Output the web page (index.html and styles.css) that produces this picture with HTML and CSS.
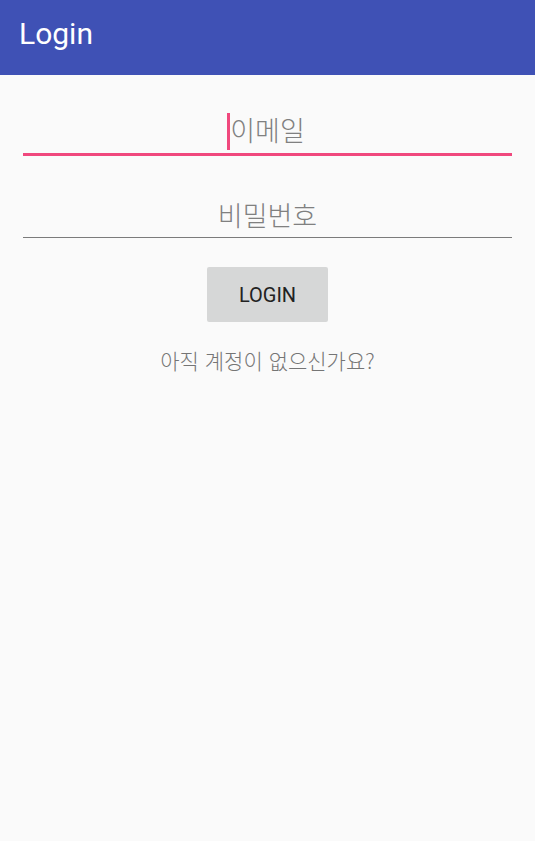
FILE: index.html
```html
<!DOCTYPE html>
<html lang="ko">
<head>
<meta charset="utf-8">
<title>Login</title>
<link rel="stylesheet" href="styles.css">
</head>
<body>
<header class="appbar"><span class="title">Login</span></header>
<main class="content">
  <div class="field focused">
    <span class="hint with-caret">이메일</span>
  </div>
  <div class="field">
    <span class="hint">비밀번호</span>
  </div>
  <button class="btn">LOGIN</button>
  <p class="signup">아직 계정이 없으신가요?</p>
</main>
</body>
</html>
```
FILE: styles.css
```css
html, body { margin: 0; padding: 0; }
body {
  background: #fafafa;
  width: 535px;
  height: 841px;
  font-family: Roboto, "Noto Sans CJK KR", sans-serif;
}
.appbar {
  height: 75px;
  background: #3f51b5;
  display: flex;
  align-items: center;
  padding-left: 19px;
  box-sizing: border-box;
}
.title {
  color: #fff;
  font-size: 30px;
  font-family: Roboto, sans-serif;
  line-height: 1;
  margin-top: -8px;
}
.content {
  display: flex;
  flex-direction: column;
  align-items: center;
  padding: 0 23px 0 23px;
}
.field {
  align-self: stretch;
  display: flex;
  justify-content: center;
  align-items: center;
  border-bottom: 1.5px solid #7b7b7b;
  font-family: "Noto Sans CJK KR", sans-serif;
  font-weight: 300;
  font-size: 27px;
  color: #808080;
  height: 46px;
  box-sizing: border-box;
}
.field.focused {
  margin-top: 35px;
  border-bottom: 3px solid #f0487d;
  height: 46px;
  padding-bottom: 4px;
}
.field + .field {
  margin-top: 36px;
  padding-top: 0;
}
.hint { line-height: 1; position: relative; }
.with-caret::before {
  content: "";
  position: absolute;
  left: -3px;
  top: -3px;
  width: 3px;
  height: 37px;
  background: #f0487d;
}
.btn {
  margin-top: 29px;
  width: 121px;
  height: 55px;
  border: none;
  border-radius: 2px;
  background: #d6d7d7;
  color: #222;
  font-family: Roboto, sans-serif;
  font-size: 20px;
  padding: 0;
}
.signup {
  margin: 25px 0 0 0;
  font-family: "Noto Sans CJK KR", sans-serif;
  font-weight: 300;
  font-size: 21px;
  color: #757575;
  line-height: 26px;
}
```
